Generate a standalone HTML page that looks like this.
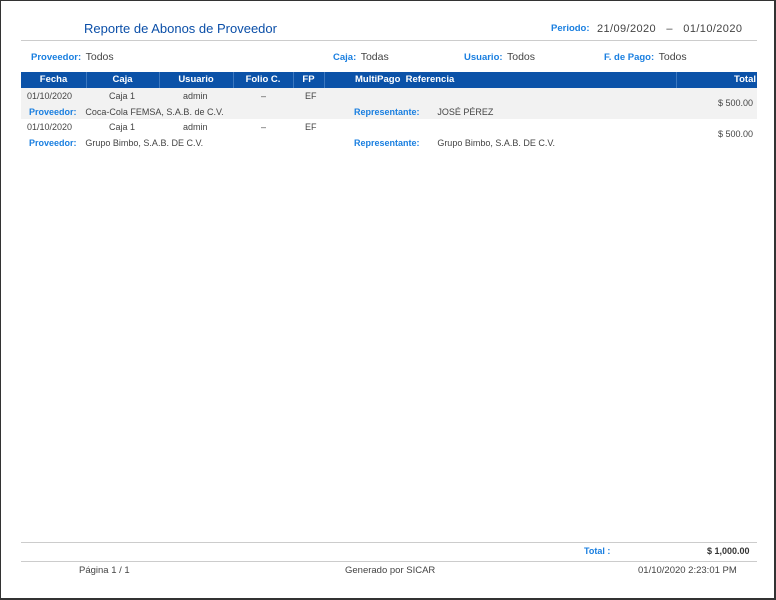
<!DOCTYPE html>
<html><head><meta charset="utf-8"><style>
*{margin:0;padding:0;box-sizing:border-box}
body{width:776px;height:600px;background:#fff;font-family:"Liberation Sans",sans-serif;position:relative;overflow:hidden}
.frame{position:absolute;left:0;top:0;width:776px;height:600px;border:1px solid #333;border-right-width:2px;border-bottom-width:2px}
.a{position:absolute;white-space:nowrap;line-height:12px}
.a span{vertical-align:baseline;line-height:12px}
.lb{color:#1a7fe0;font-weight:bold;font-size:9.5px}
.v{color:#444;font-size:10.5px}
.s{color:#444;font-size:9px}
.hr{position:absolute;left:21px;width:736px;height:1px;background:#ccc}
.hd{position:absolute;top:72px;height:16px;background:#0b52a8;color:#fff;font-weight:bold;font-size:9.5px;line-height:16px;text-align:center}
.sep{position:absolute;top:72px;width:1px;height:16px;background:#3c78c0}
</style></head><body>
<div class="frame"></div>
<div class="a" style="left:84px;top:22px;font-size:13px;line-height:14px;color:#0b4fa8">Reporte de Abonos de Proveedor</div>
<div class="a lb" style="left:551px;top:23px">Periodo:</div>
<div class="a v" style="left:597px;top:23px;font-size:11px;letter-spacing:.4px">21/09/2020&nbsp;&nbsp;&nbsp;–&nbsp;&nbsp;&nbsp;01/10/2020</div>
<div class="hr" style="top:40px"></div>
<div class="a" style="left:31px;top:50px"><span class="lb">Proveedor:</span> <span class="v">Todos</span></div>
<div class="a" style="left:333px;top:50px"><span class="lb">Caja:</span> <span class="v">Todas</span></div>
<div class="a" style="left:464px;top:50px"><span class="lb">Usuario:</span> <span class="v">Todos</span></div>
<div class="a" style="left:604px;top:50px"><span class="lb">F. de Pago:</span> <span class="v">Todos</span></div>
<div class="hd" style="left:21px;width:736px"></div>
<div class="hd" style="left:21px;width:65px">Fecha</div>
<div class="hd" style="left:86px;width:73px">Caja</div>
<div class="hd" style="left:159px;width:74px">Usuario</div>
<div class="hd" style="left:233px;width:60px">Folio C.</div>
<div class="hd" style="left:293px;width:31px">FP</div>
<div class="hd" style="left:355px;width:120px;text-align:left">MultiPago&nbsp; Referencia</div>
<div class="hd" style="left:676px;width:80px;text-align:right">Total</div>
<div class="sep" style="left:86px"></div><div class="sep" style="left:159px"></div><div class="sep" style="left:233px"></div><div class="sep" style="left:293px"></div><div class="sep" style="left:324px"></div><div class="sep" style="left:676px"></div>
<div class="a" style="left:21px;top:88px;width:736px;height:31px;background:#f2f2f2"></div>
<div class="a s" style="left:27px;top:90px">01/10/2020</div>
<div class="a s" style="left:109px;top:90px">Caja 1</div>
<div class="a s" style="left:183px;top:90px">admin</div>
<div class="a s" style="left:261px;top:90px">–</div>
<div class="a s" style="left:305px;top:90px">EF</div>
<div class="a s" style="left:718px;top:97px">$ 500.00</div>
<div class="a" style="left:29px;top:105px"><span class="lb" style="font-size:9px">Proveedor:</span>&nbsp; <span class="s">Coca-Cola FEMSA, S.A.B. de C.V.</span></div>
<div class="a" style="left:354px;top:105px"><span class="lb" style="font-size:9px">Representante:</span>&nbsp;&nbsp;&nbsp; <span class="s">JOSÉ PÉREZ</span></div>
<div class="a s" style="left:27px;top:121px">01/10/2020</div>
<div class="a s" style="left:109px;top:121px">Caja 1</div>
<div class="a s" style="left:183px;top:121px">admin</div>
<div class="a s" style="left:261px;top:121px">–</div>
<div class="a s" style="left:305px;top:121px">EF</div>
<div class="a s" style="left:718px;top:128px">$ 500.00</div>
<div class="a" style="left:29px;top:136px"><span class="lb" style="font-size:9px">Proveedor:</span>&nbsp; <span class="s">Grupo Bimbo, S.A.B. DE C.V.</span></div>
<div class="a" style="left:354px;top:136px"><span class="lb" style="font-size:9px">Representante:</span>&nbsp;&nbsp;&nbsp; <span class="s">Grupo Bimbo, S.A.B. DE C.V.</span></div>
<div class="hr" style="top:542px"></div>
<div class="a lb" style="left:584px;top:545px;font-size:9px">Total :</div>
<div class="a" style="left:707px;top:545px;font-size:9px;font-weight:bold;color:#333">$ 1,000.00</div>
<div class="hr" style="top:561px"></div>
<div class="a s" style="left:79px;top:565px;font-size:9.5px">Página 1 / 1</div>
<div class="a s" style="left:345px;top:565px;font-size:9.5px">Generado por SICAR</div>
<div class="a s" style="left:638px;top:565px;font-size:9.5px">01/10/2020 2:23:01 PM</div>
</body></html>
